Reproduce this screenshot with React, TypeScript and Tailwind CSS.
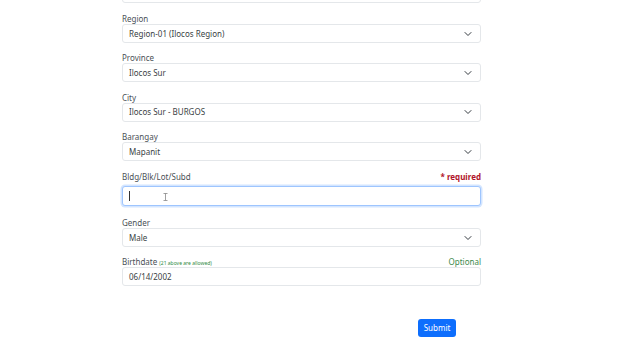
import React from 'react';

const Chevron = () => (
  <svg width="8" height="8" viewBox="0 0 16 16" fill="none" stroke="#343a40" strokeWidth="2" strokeLinecap="round" strokeLinejoin="round" className="absolute right-[8px] top-1/2 -translate-y-1/2">
    <path d="M2 5l6 6 6-6" />
  </svg>
);

function SelectBox({ value }: { value: string }) {
  return (
    <div className="relative h-[19px] border border-[#e4e7ea] rounded-[3px] bg-white flex items-center pl-[6px] text-[8px] text-[#3a3f44]">
      {value}
      <Chevron />
    </div>
  );
}

function Field({ label, value }: { label: string; value: string }) {
  return (
    <div className="mb-[8.4px]">
      <div className="h-[12px] leading-[13px] text-[8px] text-[#4a5056]">{label}</div>
      <SelectBox value={value} />
    </div>
  );
}

export default function App() {
  return (
    <div className="w-[640px] h-[360px] overflow-hidden bg-white" style={{ fontFamily: '"Noto Sans", "Open Sans", sans-serif' }}>
      <div className="ml-[122px] w-[359px] mt-[-16px]">
        {/* previous field, scrolled off */}
        <div className="h-[19px] border border-[#e4e7ea] rounded-[3px] bg-white mb-[9px]"></div>

        <Field label="Region" value="Region-01 (Ilocos Region)" />
        <Field label="Province" value="Ilocos Sur" />
        <Field label="City" value="Ilocos Sur - BURGOS" />
        <Field label="Barangay" value="Mapanit" />

        <div className="mb-[10.5px]">
          <div className="h-[16px] flex justify-between items-start text-[8px]">
            <span className="leading-[13px] text-[#4a5056]">Bldg/Blk/Lot/Subd</span>
            <span className="leading-[13px] font-bold text-[#b0142a]">* required</span>
          </div>
          <div className="relative h-[20px] border border-[#9ec5fe] rounded-[3px] bg-white shadow-[0_0_0_1.5px_rgba(13,110,253,0.18)]">
            <div className="absolute left-[6px] top-[4px] w-px h-[10px] bg-[#333]"></div>
            <svg width="5" height="8" viewBox="0 0 5 8" className="absolute left-[40px] top-[6px]" fill="none" stroke="#888" strokeWidth="0.8">
              <path d="M0.5 0.5h4M2.5 0.5v7M0.5 7.5h4" />
            </svg>
          </div>
        </div>

        <Field label="Gender" value="Male" />

        <div className="-mt-[0.4px]">
          <div className="h-[12px] leading-[13px] text-[8px] flex justify-between">
            <span className="text-[#4a5056]">
              Birthdate <span className="text-[5px] text-[#2f8a3e]">(21 above are allowed)</span>
            </span>
            <span className="text-[#3c8a4b]">Optional</span>
          </div>
          <div className="h-[19px] border border-[#e4e7ea] rounded-[3px] bg-white flex items-center pl-[6px] text-[8px] text-[#3a3f44]">
            06/14/2002
          </div>
        </div>

        <div className="mt-[27px] ml-[296px]">
          <button className="w-[38px] h-[18px] rounded-[3px] bg-[#0d6efd] text-white text-[8px] leading-[18px]">Submit</button>
        </div>
      </div>
    </div>
  );
}
